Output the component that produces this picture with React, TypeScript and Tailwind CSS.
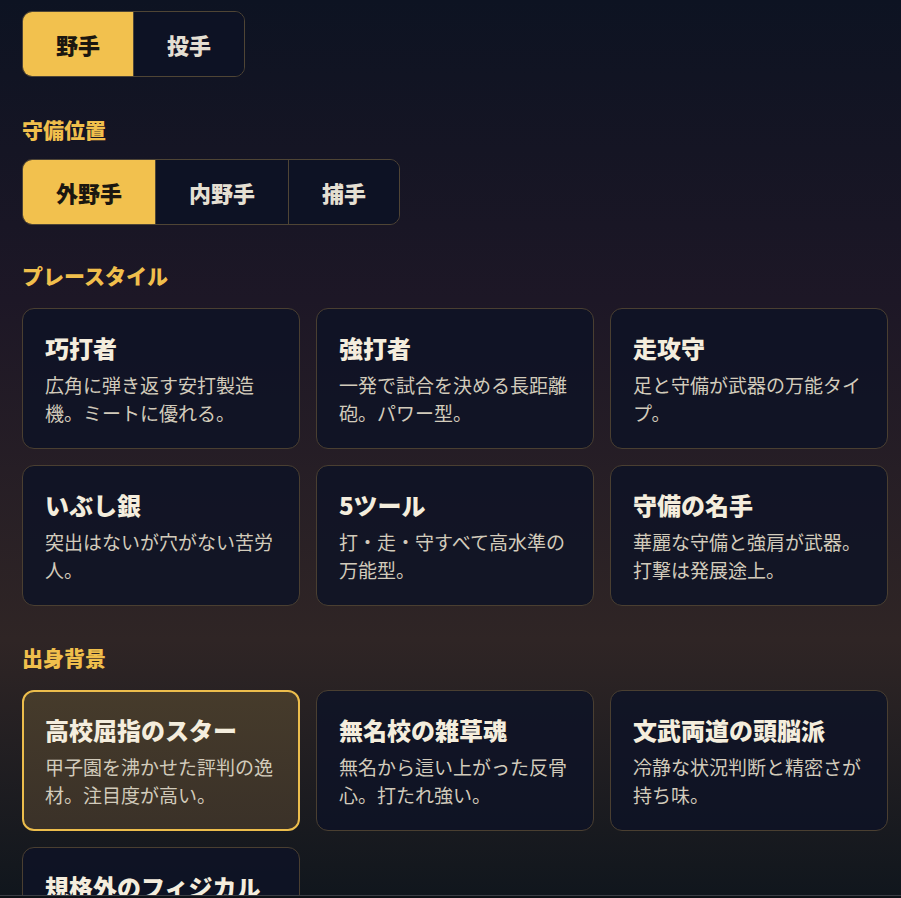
import { useState } from "react";

type Option = { name: string; desc: string };

const playStyles: Option[] = [
  { name: "巧打者", desc: "広角に弾き返す安打製造機。ミートに優れる。" },
  { name: "強打者", desc: "一発で試合を決める長距離砲。パワー型。" },
  { name: "走攻守", desc: "足と守備が武器の万能タイプ。" },
  { name: "いぶし銀", desc: "突出はないが穴がない苦労人。" },
  { name: "5ツール", desc: "打・走・守すべて高水準の万能型。" },
  { name: "守備の名手", desc: "華麗な守備と強肩が武器。打撃は発展途上。" },
];

const backgrounds: Option[] = [
  { name: "高校屈指のスター", desc: "甲子園を沸かせた評判の逸材。注目度が高い。" },
  { name: "無名校の雑草魂", desc: "無名から這い上がった反骨心。打たれ強い。" },
  { name: "文武両道の頭脳派", desc: "冷静な状況判断と精密さが持ち味。" },
  { name: "規格外のフィジカル", desc: "恵まれた体格から生まれる圧倒的なパワー。" },
];

function Segmented({
  items,
  value,
  onChange,
}: {
  items: string[];
  value: string;
  onChange: (v: string) => void;
}) {
  return (
    <div className="inline-flex h-[66px] rounded-[10px] border border-[#4f4535] overflow-hidden">
      {items.map((it, i) => (
        <button
          key={it}
          onClick={() => onChange(it)}
          className={`px-[33px] text-[22px] font-black leading-none ${
            i > 0 ? "border-l border-[#4f4535]" : ""
          } ${value === it ? "bg-[#f2c14e] text-[#1b1710]" : "bg-[#0d1224] text-[#e4dfd2]"}`}
        >
          {it}
        </button>
      ))}
    </div>
  );
}

function Label({ children }: { children: string }) {
  return <div className="text-[21px] font-black leading-[27px] text-[#f0bf4c]">{children}</div>;
}

function Card({ o, selected, onClick }: { o: Option; selected: boolean; onClick: () => void }) {
  return (
    <button
      onClick={onClick}
      className={`text-left rounded-xl ${
        selected
          ? "border-2 border-[#ecbd4c] px-[21px] pt-[21px] pb-[20px] bg-[linear-gradient(180deg,#463b2b,#3a3128)]"
          : "border border-[#4a3f31] bg-[#0e1326]/85 px-[22px] pt-[22px] pb-[21px]"
      }`}
    >
      <div className="text-[24px] font-black leading-[34px] text-[#f4eddd]">{o.name}</div>
      <div className="mt-[6px] text-[19px] leading-[28px] text-[#d2cbbb]">{o.desc}</div>
    </button>
  );
}

export default function App() {
  const [role, setRole] = useState("野手");
  const [pos, setPos] = useState("外野手");
  const [style, setStyle] = useState("");
  const [bg, setBg] = useState("高校屈指のスター");

  return (
    <div
      className="min-h-screen bg-[linear-gradient(180deg,#0d1322_0px,#1d1726_300px,#2f2525_640px,#10161d_898px)] pl-[22px] pr-[13px] pt-[11px] pb-24"
      style={{ fontFamily: '"Noto Sans CJK JP", "Noto Sans", sans-serif' }}
    >
      <Segmented items={["野手", "投手"]} value={role} onChange={setRole} />

      <div className="mt-[39px]">
        <Label>守備位置</Label>
        <div className="mt-[16px]">
          <Segmented items={["外野手", "内野手", "捕手"]} value={pos} onChange={setPos} />
        </div>
      </div>

      <div className="mt-[37px]">
        <Label>プレースタイル</Label>
        <div className="mt-[19px] grid grid-cols-3 gap-4">
          {playStyles.map((o) => (
            <Card key={o.name} o={o} selected={style === o.name} onClick={() => setStyle(o.name)} />
          ))}
        </div>
      </div>

      <div className="mt-[38px]">
        <Label>出身背景</Label>
        <div className="mt-[19px] grid grid-cols-3 gap-4">
          {backgrounds.map((o) => (
            <Card key={o.name} o={o} selected={bg === o.name} onClick={() => setBg(o.name)} />
          ))}
        </div>
      </div>

      <div className="fixed left-0 right-0 top-[895px] h-12 border-t border-[#3b3e45] bg-[#0e1217]" />
    </div>
  );
}
